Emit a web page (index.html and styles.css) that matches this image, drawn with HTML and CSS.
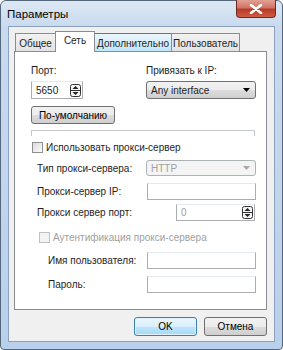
FILE: index.html
```html
<!DOCTYPE html>
<html lang="ru">
<head>
    <meta charset="UTF-8">
    <title>Параметры</title>
    <link rel="stylesheet" href="styles.css">
</head>
<body>
    <div class="window">
        <!-- Title bar -->
        <div class="titlebar">
            <span class="title">Параметры</span>
            <div class="close-btn">
                <svg width="14" height="10" viewBox="0 0 14 10">
                    <path d="M2 1 L12 9 M12 1 L2 9" stroke="#fff" stroke-width="2.6" stroke-linecap="round"/>
                </svg>
            </div>
        </div>

        <div class="client">
            <!-- Tabs -->
            <div class="tabs">
                <div class="tab tab-general">Общее</div>
                <div class="tab tab-net active">Сеть</div>
                <div class="tab tab-adv hover">Дополнительно</div>
                <div class="tab tab-user">Пользователь</div>
            </div>

            <div class="panel">
                <div class="top-grid">
                    <div class="col-port">
                        <div class="label">Порт:</div>
                        <div class="spin">
                            <span>5650</span>
                            <svg class="spin-icon" width="11" height="13" viewBox="0 0 11 13">
                                <rect x="0.5" y="0.5" width="10" height="12" rx="2" fill="#f4f4f4" stroke="#333"/>
                                <path d="M2.5 5 L5.5 2 L8.5 5 Z M2.5 8 L5.5 11 L8.5 8 Z" fill="#222"/>
                                <path d="M1 6.5 H10" stroke="#333"/>
                            </svg>
                        </div>
                        <div class="btn default-btn">По-умолчанию</div>
                    </div>
                    <div class="col-ip">
                        <div class="label">Привязать к IP:</div>
                        <div class="select">
                            <span>Any interface</span>
                            <svg width="7" height="4" viewBox="0 0 7 4"><path d="M0 0 H7 L3.5 4 Z" fill="#000"/></svg>
                        </div>
                    </div>
                </div>

                <div class="groupline"></div>

                <div class="check-row">
                    <span class="checkbox"></span>
                    <span>Использовать прокси-сервер</span>
                </div>

                <div class="form-row row-type">
                    <span class="form-label">Тип прокси-сервера:</span>
                    <div class="select disabled">
                        <span>HTTP</span>
                        <svg width="7" height="4" viewBox="0 0 7 4"><path d="M0 0 H7 L3.5 4 Z" fill="#a8a8a8"/></svg>
                    </div>
                </div>

                <div class="form-row row-ip">
                    <span class="form-label">Прокси-сервер IP:</span>
                    <div class="input"></div>
                </div>

                <div class="form-row row-port">
                    <span class="form-label">Прокси сервер порт:</span>
                    <div class="spin port-spin">
                        <span class="muted">0</span>
                        <svg class="spin-icon" width="11" height="13" viewBox="0 0 11 13">
                            <rect x="0.5" y="0.5" width="10" height="12" rx="2" fill="#f4f4f4" stroke="#333"/>
                            <path d="M2.5 5 L5.5 2 L8.5 5 Z M2.5 8 L5.5 11 L8.5 8 Z" fill="#222"/>
                            <path d="M1 6.5 H10" stroke="#333"/>
                        </svg>
                    </div>
                </div>

                <div class="check-row auth-row">
                    <span class="checkbox disabled"></span>
                    <span class="muted">Аутентификация прокси-сервера</span>
                </div>

                <div class="form-row row-user">
                    <span class="form-label sub">Имя пользователя:</span>
                    <div class="input"></div>
                </div>

                <div class="form-row row-pass">
                    <span class="form-label sub">Пароль:</span>
                    <div class="input"></div>
                </div>
            </div>

            <!-- Dialog buttons -->
            <div class="buttons">
                <div class="btn ok-btn">OK</div>
                <div class="btn">Отмена</div>
            </div>
        </div>
    </div>
</body>
</html>
```

FILE: styles.css
```css
/* Base */
* {
    margin: 0;
    padding: 0;
    box-sizing: border-box;
}

body {
    font-family: 'Liberation Sans', Arial, sans-serif;
    font-size: 10px;
    color: #1e1e1e;
    background: #fff;
}

/* Window frame */
.window {
    width: 283px;
    height: 350px;
    border: 1px solid #55677d;
    border-radius: 6px 6px 4px 4px;
    background: linear-gradient(to bottom, #dce7f4 0px, #c9daee 26px, #b9d0ea 100%);
    display: flex;
    flex-direction: column;
}

.titlebar {
    height: 25px;
    display: flex;
    justify-content: space-between;
    align-items: flex-start;
    padding-left: 6px;
}

.title {
    font-size: 11.5px;
    color: #000;
    margin-top: 7px;
}

.close-btn {
    width: 40px;
    height: 18px;
    margin-right: 6px;
    margin-top: -1px;
    border: 1px solid #6d2a24;
    border-top: none;
    border-radius: 0 0 4px 4px;
    background: linear-gradient(to bottom, #e1a193 0%, #cf7466 45%, #b73b28 55%, #cf5a43 100%);
    display: flex;
    align-items: center;
    justify-content: center;
}

/* Client area */
.client {
    flex: 1;
    margin: 0 7px 7px 7px;
    border: 1px solid #8aa2bf;
    background: #f0f0f0;
    padding: 5px 6px 0 5px;
    display: flex;
    flex-direction: column;
}

/* Tabs */
.tabs {
    display: flex;
    height: 19px;
    align-items: flex-end;
    padding-left: 1px;
    position: relative;
    z-index: 1;
}

.tab {
    height: 18px;
    border: 1px solid #898c95;
    border-bottom: none;
    background: linear-gradient(to bottom, #f2f2f2, #e3e3e3);
    padding-top: 4px;
    margin-right: -1px;
    text-align: center;
    white-space: nowrap;
}

.tab-general { width: 41px; }
.tab-net { width: 40px; }
.tab-adv { width: 78px; }
.tab-user { width: 69px; }

.tab.hover {
    background: linear-gradient(to bottom, #eaf6fd, #d9effc 50%, #bee6fd);
    border-color: #3c7fb1;
}

.tab.active {
    height: 21px;
    background: #fff;
    margin-bottom: -1px;
    padding-top: 3px;
    z-index: 2;
}

.panel {
    height: 259px;
    margin-right: 1px;
    border: 1px solid #898c95;
    background: #fff;
    padding: 12px 10px 0 16px;
}

/* Top section */
.top-grid {
    display: flex;
}

.col-port {
    width: 117px;
}

.label {
    height: 14px;
    line-height: 14px;
    margin-bottom: 3px;
}

.spin {
    width: 52px;
    height: 18px;
    border: 1px solid #abadb3;
    border-top-color: #e3e9ef;
    display: flex;
    align-items: center;
    justify-content: space-between;
    padding: 0 1px 0 4px;
    background: #fff;
}

.select {
    width: 110px;
    height: 18px;
    border: 1px solid #707070;
    border-radius: 3px;
    background: linear-gradient(to bottom, #f2f2f2 0%, #ebebeb 50%, #dddddd 50%, #cfcfcf 100%);
    display: flex;
    align-items: center;
    justify-content: space-between;
    padding: 0 5px 0 4px;
}

.select.disabled {
    border-color: #adb2b5;
    background: #f4f4f4;
    color: #a0a0a0;
    height: 16px;
}

.btn {
    height: 19px;
    border: 1px solid #707070;
    border-radius: 3px;
    background: linear-gradient(to bottom, #f2f2f2 0%, #ebebeb 50%, #dddddd 50%, #cfcfcf 100%);
    display: flex;
    align-items: center;
    justify-content: center;
    color: #000;
}

.default-btn {
    width: 84px;
    height: 18px;
    margin-top: 7px;
}

.groupline {
    height: 6px;
    margin-top: 6px;
    margin-right: 1px;
    border: 1px solid #c4c8cc;
    border-bottom: none;
}

/* Checkbox rows */
.check-row {
    display: flex;
    align-items: center;
    gap: 3px;
    margin-top: 5px;
    height: 13px;
    margin-left: 1px;
}

.checkbox {
    width: 11px;
    height: 11px;
    border: 1px solid #8f8f8f;
    background: linear-gradient(135deg, #dcdcdc, #fbfbfb);
}

.checkbox.disabled {
    border-color: #c0c0c0;
    background: #f4f4f4;
}

.auth-row {
    margin-left: 8px;
    margin-top: 10px;
}

.muted {
    color: #a0a0a0;
}

/* Proxy form rows */
.form-row {
    display: flex;
    align-items: center;
    justify-content: space-between;
    padding-left: 6px;
}

.form-label.sub {
    margin-left: 11px;
}

.input {
    width: 109px;
    height: 17px;
    border: 1px solid #abadb3;
    border-top-color: #e3e9ef;
    background: #fff;
}

.port-spin {
    width: 79px;
    height: 17px;
    margin-right: 1px;
}

.row-type { margin-top: 6px; }
.row-ip { margin-top: 7px; }
.row-port { margin-top: 4px; }
.row-user { margin-top: 8px; }
.row-pass { margin-top: 7px; }

/* Bottom buttons */
.buttons {
    display: flex;
    justify-content: flex-end;
    gap: 7px;
    margin-top: 7px;
    padding-right: 1px;
}

.buttons .btn {
    width: 63px;
}

.ok-btn {
    border-color: #3c7fb1;
    background: linear-gradient(to bottom, #eaf6fd 0%, #d9f0fc 50%, #bee6fd 50%, #a7d9f5 100%);
    box-shadow: inset 0 0 0 1px #dff2fd;
}
```
